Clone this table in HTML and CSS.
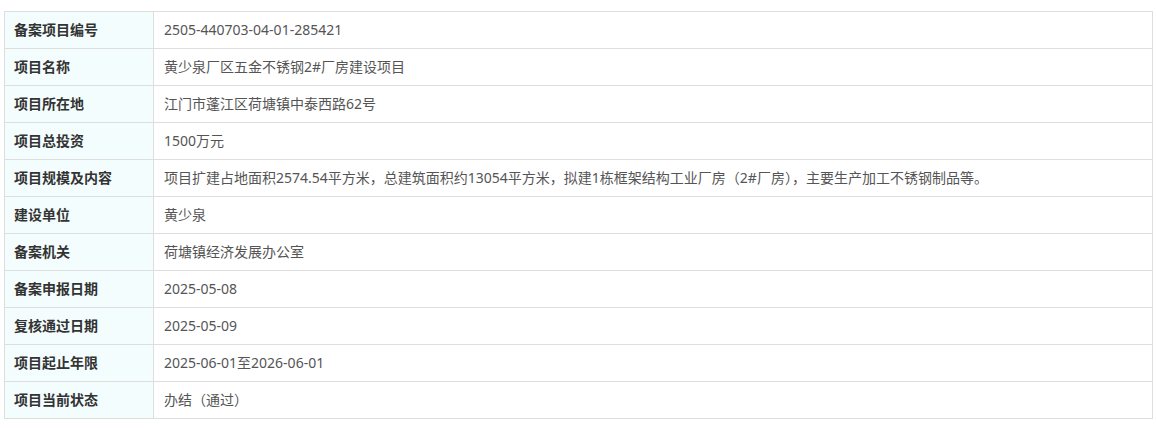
FILE: index.html
```html
<!DOCTYPE html>
<html lang="zh-CN">
<head>
    <meta charset="UTF-8">
    <title>备案项目信息</title>
    <link rel="stylesheet" href="styles.css">
</head>
<body>
    <table class="info-table">
        <tr><th>备案项目编号</th><td>2505-440703-04-01-285421</td></tr>
        <tr><th>项目名称</th><td>黄少泉厂区五金不锈钢2#厂房建设项目</td></tr>
        <tr><th>项目所在地</th><td>江门市蓬江区荷塘镇中泰西路62号</td></tr>
        <tr><th>项目总投资</th><td>1500万元</td></tr>
        <tr><th>项目规模及内容</th><td>项目扩建占地面积2574.54平方米，总建筑面积约13054平方米，拟建1栋框架结构工业厂房（2#厂房），主要生产加工不锈钢制品等。</td></tr>
        <tr><th>建设单位</th><td>黄少泉</td></tr>
        <tr><th>备案机关</th><td>荷塘镇经济发展办公室</td></tr>
        <tr><th>备案申报日期</th><td>2025-05-08</td></tr>
        <tr><th>复核通过日期</th><td>2025-05-09</td></tr>
        <tr><th>项目起止年限</th><td>2025-06-01至2026-06-01</td></tr>
        <tr><th>项目当前状态</th><td>办结（通过）</td></tr>
    </table>
</body>
</html>
```

FILE: styles.css
```css
body {
    font-family: "Noto Sans", "Noto Sans CJK SC", sans-serif;
    font-size: 14px;
    background-color: #fff;
    margin: 0;
    padding: 11px 4px;
}
.info-table {
    width: 1149px;
    border-collapse: collapse;
    border: 1px solid #dedede;
}
.info-table th,
.info-table td {
    height: 37px;
    padding: 0 10px;
    border: 1px solid #dedede;
    text-align: left;
    box-sizing: border-box;
    line-height: 20px;
}
.info-table th {
    width: 149px;
    padding-left: 9px;
    background-color: #f4fdfd;
    color: #333;
    font-weight: bold;
}
.info-table td {
    color: #555;
}
```
